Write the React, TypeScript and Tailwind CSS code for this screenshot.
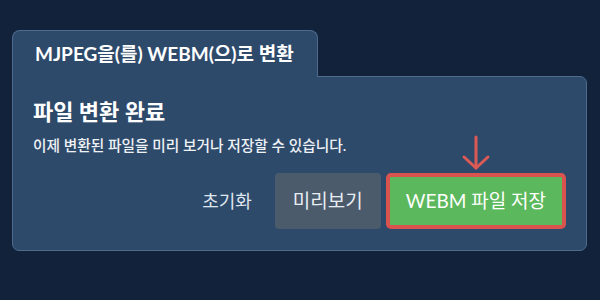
export default function App() {
  return (
    <div
      className="w-[600px] h-[300px] bg-[#11223a] pt-[30px] pl-[12px] pr-[13px] text-white"
      style={{ fontFamily: "Lato, 'Noto Sans CJK KR', sans-serif" }}
    >
      {/* Tab */}
      <div className="relative z-10 -mb-px flex h-[47px] w-[306px] items-center rounded-t-[8px] border border-b-0 border-[#4e6b8d] bg-[#2e4a6b] pl-[22px]">
        <span className="text-[19px] font-bold">MJPEG을(를) WEBM(으)로 변환</span>
      </div>

      {/* Card */}
      <div className="relative h-[175px] rounded-b-[7px] rounded-tr-[7px] border border-[#4e6b8d] bg-[#2e4a6b] pl-[20px] pr-[17px] pt-[20px]">
        <h2 className="text-[22px] font-bold leading-[30px]">파일 변환 완료</h2>
        <p className="mt-[8px] text-[14.7px] font-medium leading-[20px] text-[#eef2f6]">
          이제 변환된 파일을 미리 보거나 저장할 수 있습니다.
        </p>

        <div className="mt-[18px] flex items-center justify-end pr-[3px]">
          <button className="mr-[11px] px-3 text-[18px] text-[#dfe6ee]">초기화</button>
          <button className="mr-[5px] h-[56px] rounded-[4px] bg-[#4b5b6c] px-[18px] text-[19px] text-[#e8edf2]">
            미리보기
          </button>
          <div className="relative">
            {/* Arrow */}
            <svg
              className="absolute left-1/2 -top-[38px] -translate-x-1/2"
              width="30"
              height="36"
              viewBox="0 0 30 36"
              fill="none"
              stroke="#dc5a55"
              strokeWidth="3"
              strokeLinecap="round"
              strokeLinejoin="round"
            >
              <path d="M15 2 V33" />
              <path d="M3 22 L15 33 L27 22" />
            </svg>
            <button className="h-[56px] rounded-[5px] border-[4px] border-[#d9534f] bg-[#5cb85c] px-[16px] text-[19px] text-white">
              WEBM 파일 저장
            </button>
          </div>
        </div>
      </div>
    </div>
  );
}
